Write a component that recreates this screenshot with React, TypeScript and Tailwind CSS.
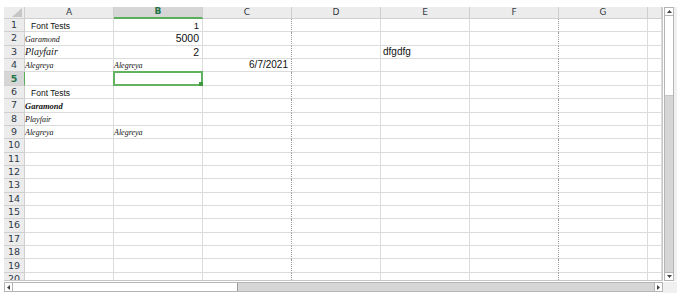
import React from "react";

const COLS = ["A", "B", "C", "D", "E", "F", "G", ""];
const ROWS = Array.from({ length: 20 }, (_, i) => i + 1);

type Cell = { text: string; cls: string };

const serif = "font-['Liberation_Serif',serif] italic";
const sans = "font-['Liberation_Sans',Arial,sans-serif]";

const data: Record<string, Cell> = {
  "1A": { text: "Font Tests", cls: `${sans} text-[8.5px] pl-[6px]` },
  "1B": { text: "1", cls: `${sans} text-[9.5px] justify-end pr-[3px]` },
  "2A": { text: "Garamond", cls: `${serif} text-[8px]` },
  "2B": { text: "5000", cls: `${sans} text-[10.5px] justify-end pr-[3px]` },
  "3A": { text: "Playfair", cls: `${serif} text-[10px]` },
  "3B": { text: "2", cls: `${sans} text-[10.5px] justify-end pr-[3px]` },
  "3E": { text: "dfgdfg", cls: `${sans} text-[10px] pl-[2px]` },
  "4A": { text: "Alegreya", cls: `${serif} text-[8px]` },
  "4B": { text: "Alegreya", cls: `${serif} text-[8px]` },
  "4C": { text: "6/7/2021", cls: `${sans} text-[10px] justify-end pr-[3px]` },
  "6A": { text: "Font Tests", cls: `${sans} text-[8.5px] pl-[6px]` },
  "7A": { text: "Garamond", cls: `${serif} text-[8.5px] font-bold` },
  "8A": { text: "Playfair", cls: `${serif} text-[8px]` },
  "9A": { text: "Alegreya", cls: `${serif} text-[8px]` },
  "9B": { text: "Alegreya", cls: `${serif} text-[8px]` },
};

function colWidth(c: string) {
  return c === "" ? "w-[14px]" : "w-[89px]";
}

function rightBorder(c: string) {
  if (c === "C" || c === "F") return "border-r [border-right-style:dotted] border-r-[#9a9a9a]";
  return "border-r border-r-[#dcdcdc]";
}

export default function App() {
  return (
    <div className="w-[690px] h-[302px] bg-white overflow-hidden pt-[7px] pl-[4px] font-['DejaVu_Sans',sans-serif]">
      <div className="flex h-[274px]">
        {/* grid */}
        <div className="w-[659px] h-[274px] overflow-hidden border-r border-r-[#c6c6c6] border-b border-b-[#c6c6c6]">
          {/* header */}
          <div className="flex h-[12px]">
            <div className="relative w-[21px] shrink-0 bg-[#ececec] border-r border-r-[#cfcfcf] border-b border-b-[#cfcfcf] overflow-hidden">
              <svg className="absolute right-[2px] bottom-[1px]" width="10" height="9" viewBox="0 0 10 9">
                <polygon points="10,0 10,9 0,9" fill="#c6c6c6" />
              </svg>
            </div>
            {COLS.map((c) => (
              <div
                key={c || "x"}
                className={`${colWidth(c)} shrink-0 flex items-center justify-center text-[9px] ${
                  c === "B"
                    ? "bg-[#d6d6d6] text-[#217346] font-bold border-b-2 border-b-[#5aad5a]"
                    : "bg-[#ececec] text-[#333a44] border-b border-b-[#cfcfcf]"
                } border-r border-r-[#cfcfcf]`}
              >
                {c}
              </div>
            ))}
          </div>
          {ROWS.map((r) => (
            <div key={r} className="flex h-[13.37px]">
              <div
                className={`w-[21px] shrink-0 flex items-center justify-center text-[9.5px] border-r border-b ${
                  r === 5
                    ? "bg-[#d6d6d6] font-bold text-[#217346] border-r-[#5aad5a] border-b-[#cfcfcf]"
                    : "bg-[#ececec] text-[#2d3a4a] border-r-[#cfcfcf] border-b-[#cfcfcf]"
                }`}
              >
                {r}
              </div>
              {COLS.map((c) => {
                const cell = data[`${r}${c}`];
                const selected = r === 5 && c === "B";
                return (
                  <div
                    key={c || "x"}
                    className={`relative ${colWidth(c)} shrink-0 flex items-end pb-[1px] whitespace-nowrap text-[#111] border-b border-b-[#dcdcdc] ${rightBorder(c)} ${
                      cell ? cell.cls : ""
                    }`}
                  >
                    {cell ? <span className="leading-none">{cell.text}</span> : null}
                    {selected ? (
                      <div className="absolute -left-[1px] -top-[1px] w-[90px] h-[15px] border-2 border-[#62b262]">
                        <div className="absolute -right-[2px] -bottom-[2px] w-[4px] h-[4px] bg-[#3f9a3f]" />
                      </div>
                    ) : null}
                  </div>
                );
              })}
            </div>
          ))}
        </div>
        {/* vertical scrollbar */}
        <div className="ml-[1px] w-[10px] h-[274px] flex flex-col border border-[#b5b5b5] bg-[#d6d6d6]">
          <div className="h-[8px] bg-white border-b border-b-[#b5b5b5] flex items-center justify-center">
            <svg width="5" height="3" viewBox="0 0 5 3"><polygon points="2.5,0 5,3 0,3" fill="#444" /></svg>
          </div>
          <div className="h-[80px] bg-white border-b border-b-[#c6c6c6]" />
          <div className="flex-1" />
          <div className="h-[8px] bg-white border-t border-t-[#b5b5b5] flex items-center justify-center">
            <svg width="5" height="3" viewBox="0 0 5 3"><polygon points="0,0 5,0 2.5,3" fill="#444" /></svg>
          </div>
        </div>
        <div className="w-[3px] h-[274px] bg-[#f0f0f0]" />
      </div>
      {/* horizontal scrollbar row */}
      <div className="flex mt-[1px]">
        <div className="w-[659px] h-[10px] flex border border-[#b5b5b5] bg-[#d6d6d6]">
          <div className="w-[8px] bg-white border-r border-r-[#b5b5b5] flex items-center justify-center">
            <svg width="3" height="5" viewBox="0 0 3 5"><polygon points="3,0 3,5 0,2.5" fill="#444" /></svg>
          </div>
          <div className="w-[225px] bg-white border-r border-r-[#9a9a9a]" />
          <div className="flex-1" />
          <div className="w-[8px] bg-white border-l border-l-[#b5b5b5] flex items-center justify-center">
            <svg width="3" height="5" viewBox="0 0 3 5"><polygon points="0,0 3,2.5 0,5" fill="#444" /></svg>
          </div>
        </div>
        <div className="w-[14px] h-[11px] bg-[#f0f0f0]" />
      </div>
    </div>
  );
}
